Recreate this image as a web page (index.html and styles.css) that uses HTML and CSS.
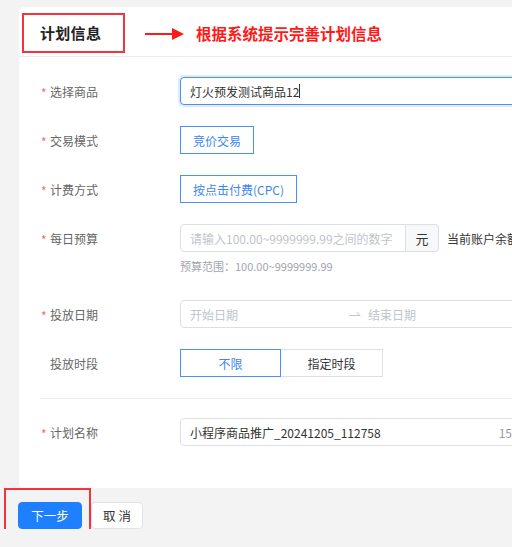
FILE: index.html
```html
<!DOCTYPE html>
<html lang="zh-CN">
<head>
<meta charset="utf-8">
<title>新建推广计划</title>
<link rel="stylesheet" href="styles.css">
</head>
<body>
<div class="page">
  <section class="card">
    <header class="card-head">
      <div class="title-box"><h2 class="title">计划信息</h2></div>
      <svg class="hint-arrow" width="40" height="14" viewBox="0 0 40 14">
        <line x1="0" y1="7" x2="28" y2="7" stroke="#ff1a1a" stroke-width="2"/>
        <polygon points="27,1 39,7 27,13" fill="#ff1a1a"/>
      </svg>
      <span class="hint-text">根据系统提示完善计划信息</span>
    </header>

    <form class="form">
      <div class="row">
        <label class="label"><i class="req">*</i>选择商品</label>
        <div class="input input-wide is-focus"><span class="value">灯火预发测试商品12</span><span class="caret"></span></div>
      </div>

      <div class="row">
        <label class="label"><i class="req">*</i>交易模式</label>
        <button type="button" class="opt is-active">竞价交易</button>
      </div>

      <div class="row">
        <label class="label"><i class="req">*</i>计费方式</label>
        <button type="button" class="opt is-active">按点击付费(CPC)</button>
      </div>

      <div class="row row-help">
        <label class="label"><i class="req">*</i>每日预算</label>
        <div class="budget">
          <div class="input input-budget"><span class="ph">请输入100.00~9999999.99之间的数字</span></div>
          <span class="addon">元</span>
          <span class="balance">当前账户余额</span>
        </div>
      </div>
      <p class="help">预算范围：100.00~9999999.99</p>

      <div class="row">
        <label class="label"><i class="req">*</i>投放日期</label>
        <div class="input input-wide date-range">
          <span class="ph date-start">开始日期</span>
          <svg class="range-sep" width="12" height="8" viewBox="0 0 12 8">
            <path d="M0 6.5 H11 M7.5 3 L11 6.5" fill="none" stroke="#c0c4cc" stroke-width="1"/>
          </svg>
          <span class="ph">结束日期</span>
        </div>
      </div>

      <div class="row">
        <label class="label">投放时段</label>
        <div class="seg">
          <button type="button" class="seg-item is-active">不限</button>
          <button type="button" class="seg-item">指定时段</button>
        </div>
      </div>

      <hr class="divider">

      <div class="row row-last">
        <label class="label"><i class="req">*</i>计划名称</label>
        <div class="input input-wide"><span class="value">小程序商品推广_20241205_112758</span><span class="count">15/30</span></div>
      </div>
    </form>
  </section>

  <footer class="actions">
    <button type="button" class="btn btn-primary">下一步</button>
    <button type="button" class="btn btn-plain">取 消</button>
    <span class="mark-box"></span>
  </footer>
</div>
</body>
</html>
```

FILE: styles.css
```css
* {
  box-sizing: border-box;
}

html,
body {
  margin: 0;
  background: #f3f3f3;
  overflow: hidden;
}

body {
  font-family: "Noto Sans CJK SC", "Open Sans", sans-serif;
  font-size: 12px;
  color: #333;
}

.page {
  padding: 7px 0 0 19px;
  width: 700px;
}

/* white panel */
.card {
  background: #fff;
  border-radius: 5px 0 0 5px;
  width: 620px;
  padding-bottom: 42px;
}

.card-head {
  height: 50px;
  border-bottom: 1px solid #ececec;
  display: flex;
  align-items: center;
}

.title-box {
  margin-left: 3px;
  margin-top: 2px;
  width: 103px;
  height: 40px;
  border: 2px solid #f5333a;
  display: flex;
  align-items: center;
  padding-left: 16px;
}

.title {
  margin: 0;
  font-size: 15px;
  font-weight: 700;
  color: #222;
  letter-spacing: 0.3px;
}

.hint-arrow {
  margin-left: 20px;
  margin-top: 4px;
}

.hint-text {
  margin-left: 11px;
  margin-top: 3px;
  font-size: 15.5px;
  font-weight: 700;
  color: #ff1a1a;
}

/* form */
.form {
  padding-top: 20px;
}

.row {
  display: flex;
  align-items: center;
  height: 28px;
  margin-bottom: 21px;
  padding-left: 22px;
}

.row-help,
.row-last {
  margin-bottom: 0;
}

.label {
  width: 139px;
  flex: none;
  display: flex;
  align-items: center;
  padding-left: 9px;
  color: #666;
  font-size: 12px;
  position: relative;
}

.req {
  position: absolute;
  left: 0;
  top: 1px;
  font-style: normal;
  color: #f56c6c;
  font-size: 12px;
}

.input {
  height: 28px;
  border: 1px solid #dcdfe6;
  border-radius: 4px;
  display: flex;
  align-items: center;
  padding: 0 9px;
  background: #fff;
}

.input-wide {
  width: 360px;
  flex: none;
}

.is-focus {
  border-color: #4a90f5;
  box-shadow: 0 0 0 2px rgba(74, 144, 245, 0.18);
}

.value {
  color: #333;
  white-space: nowrap;
}

.caret {
  width: 1px;
  height: 14px;
  background: #333;
}

.ph {
  color: #c0c4cc;
  white-space: nowrap;
}

.count {
  margin-left: auto;
  color: #999;
}

/* option buttons */
.opt {
  height: 28px;
  padding: 0 12px;
  font: inherit;
  background: #fff;
  border: 1px solid #dcdfe6;
  border-radius: 0;
  color: #333;
}

.opt.is-active {
  border-color: #4a90f5;
  color: #3d86f0;
}

/* budget */
.budget {
  display: flex;
  align-items: center;
}

.input-budget {
  width: 226px;
  border-radius: 4px 0 0 4px;
}

.addon {
  height: 28px;
  width: 33px;
  border: 1px solid #dcdfe6;
  border-left: none;
  border-radius: 0 4px 4px 0;
  background: #f7f8fa;
  display: flex;
  align-items: center;
  justify-content: center;
  color: #333;
  font-size: 13px;
}

.balance {
  margin-left: 8px;
  color: #333;
  white-space: nowrap;
}

.help {
  margin: 6px 0 26px 161px;
  line-height: 16px;
  font-size: 11px;
  color: #a3a6ad;
}

/* date range */
.date-start {
  width: 158px;
}

.range-sep {
  width: 14px;
  margin-right: 6px;
  margin-top: -2px;
}

/* segmented control */
.seg {
  display: flex;
}

.seg-item {
  width: 101px;
  height: 28px;
  font: inherit;
  background: #fff;
  border: 1px solid #dcdfe6;
  color: #333;
}

.seg-item + .seg-item {
  border-left: none;
  width: 102px;
}

.seg-item.is-active {
  border-color: #4a90f5;
  color: #3d86f0;
}

.divider {
  margin: 0 0 19px 21px;
  border: none;
  border-top: 1px solid #ececec;
}

/* footer actions */
.actions {
  position: relative;
  display: flex;
  gap: 9px;
  margin-top: 14px;
  margin-left: -1px;
}

.btn {
  height: 27px;
  font: inherit;
  font-size: 12.5px;
  border-radius: 4px;
  padding: 0;
}

.btn-primary {
  width: 64px;
  background: #1e80ff;
  border: 1px solid #1e80ff;
  color: #fff;
}

.btn-plain {
  width: 52px;
  background: #fff;
  border: 1px solid #e2e3e6;
  color: #333;
}

/* red outline drawn round the next-step button */
.mark-box {
  position: absolute;
  left: -14px;
  top: -14px;
  width: 87px;
  height: 55px;
  border: 2px solid #f5333a;
}
```
